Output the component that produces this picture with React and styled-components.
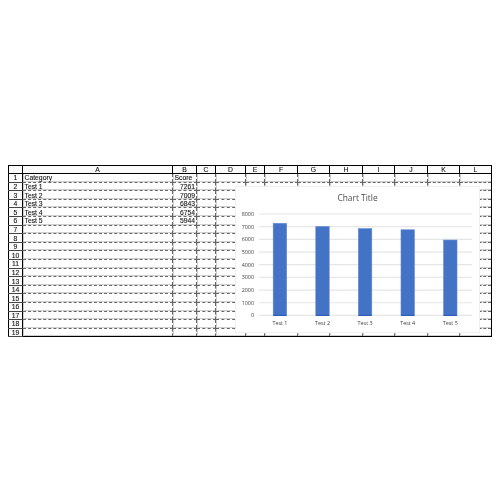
import React from 'react';
import styled, { createGlobalStyle } from 'styled-components';

const columns = [
  { name: 'A', width: 150 },
  { name: 'B', width: 24 },
  { name: 'C', width: 19 },
  { name: 'D', width: 30 },
  { name: 'E', width: 19 },
  { name: 'F', width: 33 },
  { name: 'G', width: 32 },
  { name: 'H', width: 33 },
  { name: 'I', width: 32 },
  { name: 'J', width: 33 },
  { name: 'K', width: 32 },
  { name: 'L', width: 32 },
];

const scores = [
  ['Test 1', 7261],
  ['Test 2', 7009],
  ['Test 3', 6843],
  ['Test 4', 6754],
  ['Test 5', 5944],
];

const rows = Array.from({ length: 19 }, (_, i) => i + 1);
const ticks = [8000, 7000, 6000, 5000, 4000, 3000, 2000, 1000, 0];

// chart plot coordinates, relative to the chart card
const plotTop = 27;
const plotBottom = 128.4;
const plotLeft = 23;
const plotRight = 236;
const barWidth = 13.4;
const barStep = 42.6;
const firstBarX = 37.2;

const yFor = value => plotBottom - (value / 8000) * (plotBottom - plotTop);

function BarChart() {
  return (
    <ChartCard>
      <ChartTitle>Chart Title</ChartTitle>
      <PlotSvg width="243" height="145" viewBox="0 0 243 145">
        {ticks.map(tick => (
          <g key={tick}>
            <line x1={plotLeft} x2={plotRight} y1={yFor(tick)} y2={yFor(tick)} stroke="#e6e6e6" strokeWidth="1.2" />
            <AxisLabel x={plotLeft - 5} y={yFor(tick) + 2} textAnchor="end">{tick}</AxisLabel>
          </g>
        ))}
        {scores.map(([name, score], i) => {
          const x = firstBarX + i * barStep;
          return (
            <g key={name}>
              <rect
                x={x}
                y={yFor(score)}
                width={barWidth}
                height={plotBottom - yFor(score)}
                fill="#4472c4"
                stroke="#5b86d2"
                strokeWidth="0.6"
              />
              <line x1={x} x2={x + barWidth} y1={plotBottom} y2={plotBottom} stroke="#2459b8" strokeWidth="1" />
              <AxisLabel x={x + barWidth / 2} y={138} textAnchor="middle">{name}</AxisLabel>
            </g>
          );
        })}
      </PlotSvg>
    </ChartCard>
  );
}

function App() {
  return (
    <Page>
      <GlobalStyle />
      <Sheet>
        <Grid>
          <colgroup>
            <col style={{ width: 14 }} />
            {columns.map(col => <col key={col.name} style={{ width: col.width }} />)}
          </colgroup>
          <thead>
            <tr>
              <Corner />
              {columns.map(col => <ColHead key={col.name}>{col.name}</ColHead>)}
            </tr>
          </thead>
          <tbody>
            {rows.map(row => {
              const record = scores[row - 2];
              return (
                <tr key={row}>
                  <RowHead>{row}</RowHead>
                  {columns.map(col => {
                    if (col.name === 'A') {
                      return <Cell key={col.name}>{row === 1 ? 'Category' : record && record[0]}</Cell>;
                    }
                    if (col.name === 'B') {
                      return <Cell key={col.name} $number={!!record}>{row === 1 ? 'Score' : record && record[1]}</Cell>;
                    }
                    return <Cell key={col.name} />;
                  })}
                </tr>
              );
            })}
          </tbody>
        </Grid>
        <BarChart />
      </Sheet>
    </Page>
  );
}

export default App;

const GlobalStyle = createGlobalStyle`
  html, body {
    margin: 0;
    background: #fff;
  }
`;

const Page = styled.div`
  width: 500px;
  height: 500px;
  padding: 164.5px 0 0 8px;
  box-sizing: border-box;
  overflow: hidden;
`;

const Sheet = styled.div`
  position: relative;
  width: 483px;
  filter: blur(0.3px);
`;

const Grid = styled.table`
  width: 483px;
  table-layout: fixed;
  border-collapse: collapse;
  border: 1.2px solid #000;
  font-family: "Liberation Sans", Arial, sans-serif;
  font-size: 6.8px;
  color: #111;
  -webkit-text-stroke: 0.1px #111;
`;

const ColHead = styled.th`
  height: 8.6px;
  padding: 0;
  box-sizing: border-box;
  border-left: 1px solid #000;
  border-bottom: 1.5px solid #000;
  font-weight: 400;
  line-height: 7px;
  text-align: center;
  background: #fbfbfb;
`;

const Corner = styled(ColHead)`
  border-left: none;
  border-right: 1.5px solid #000;
`;

const RowHead = styled.td`
  height: 8.6px;
  padding: 0;
  box-sizing: border-box;
  border-right: 1.5px solid #000;
  border-bottom: 1px solid #444;
  line-height: 7px;
  text-align: center;
  font-weight: 400;
  background: #fbfbfb;
`;

const Cell = styled.td`
  height: 8.6px;
  padding: 0 1px 0 1.5px;
  box-sizing: border-box;
  border-left: 1px dashed #666;
  border-bottom: 1px dashed #666;
  line-height: 7px;
  white-space: nowrap;
  overflow: hidden;
  text-align: ${props => (props.$number ? 'right' : 'left')};
  background:
    linear-gradient(#cfcfcf, #cfcfcf) left bottom / 100% 1px no-repeat,
    linear-gradient(#cfcfcf, #cfcfcf) left top / 1px 100% no-repeat;
`;

const ChartCard = styled.div`
  position: absolute;
  left: 228px;
  top: 22.5px;
  width: 243px;
  height: 145px;
  background: #fff;
  box-shadow: 0 0 0 1px #f0f0f0;
`;

const ChartTitle = styled.div`
  position: absolute;
  left: 0;
  right: 0;
  top: 5px;
  text-align: center;
  font-family: "Open Sans", sans-serif;
  font-size: 8.4px;
  line-height: 12px;
  color: #4d4d4d;
`;

const PlotSvg = styled.svg`
  display: block;
`;

const AxisLabel = styled.text`
  font-family: "Open Sans", sans-serif;
  font-size: 5.4px;
  fill: #404040;
`;
